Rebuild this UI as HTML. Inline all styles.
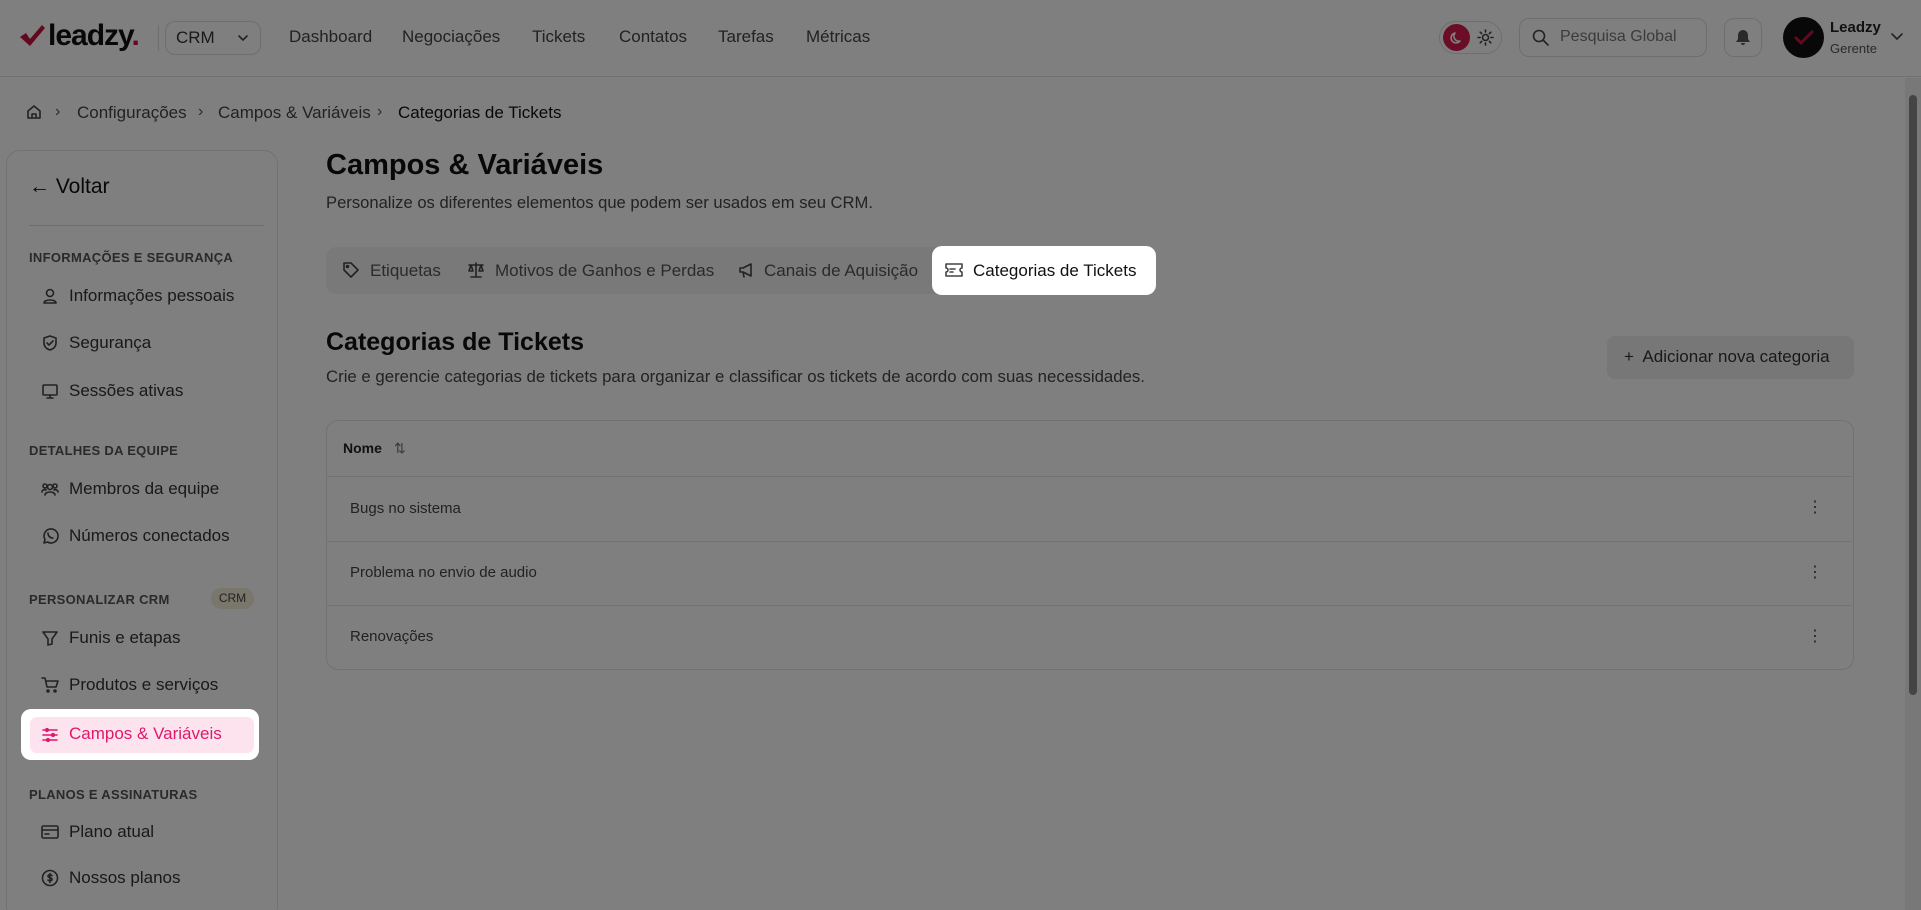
<!DOCTYPE html>
<html style="overflow:hidden;height:910px"><head><meta charset="utf-8"><style>
*{box-sizing:border-box;margin:0;padding:0}
body{width:1921px;height:910px;overflow:hidden;background:#fff;font-family:"Liberation Sans",Arial,sans-serif;color:#1a1a1a;position:relative}
.a{position:absolute;white-space:nowrap}
.hdr{position:absolute;left:0;top:0;width:1921px;height:77px;border-bottom:1px solid #e2e2e2;background:#fff}
.nav{font-size:17px;color:#444;top:27px}
.side{position:absolute;left:6px;top:150px;width:272px;height:770px;border:1px solid #e4e4e4;border-radius:14px;background:#fff}
.lbl{font-size:13px;font-weight:bold;color:#555;letter-spacing:.3px;left:29px}
.it{font-size:17px;color:#333;left:69px}
.ic{position:absolute;left:41px;width:18px;height:18px}
svg{fill:none;stroke:#444;stroke-width:1.6;stroke-linecap:round;stroke-linejoin:round}
.ov{position:absolute;left:0;top:0;width:1921px;height:910px;background:rgba(0,0,0,.5);z-index:5}
.tb{font-size:17px;color:#555;top:261px}
.row{position:absolute;left:327px;width:1525px;height:64px;border-top:1px solid #e6e6e6;font-size:15px;color:#444}
</style></head><body>
<div class="hdr"></div>
<svg class="a" style="left:18px;top:24px;width:28px;height:24px;stroke:none" viewBox="0 0 28 24"><path d="M2 13 L8 9 L12 15 L24 1 L27 4 L12 22 Z" fill="#c8103f"/></svg>
<div class="a" style="left:48px;top:19px;font-size:30px;font-weight:bold;color:#111;letter-spacing:-1px">leadzy<span style="color:#d0104a">.</span></div>
<div class="a" style="left:158px;top:25px;width:1px;height:26px;background:#ddd"></div>
<div class="a" style="left:165px;top:21px;width:96px;height:34px;border:1px solid #ddd;border-radius:10px"></div>
<div class="a" style="left:176px;top:28px;font-size:17px;color:#333">CRM</div>
<svg class="a" style="left:237px;top:33px;width:12px;height:10px" viewBox="0 0 12 10"><path d="M2 3l4 4 4-4"/></svg>
<div class="a nav" style="left:289px">Dashboard</div>
<div class="a nav" style="left:402px">Negociações</div>
<div class="a nav" style="left:532px">Tickets</div>
<div class="a nav" style="left:619px">Contatos</div>
<div class="a nav" style="left:718px">Tarefas</div>
<div class="a nav" style="left:806px">Métricas</div>
<div class="a" style="left:1439px;top:21px;width:63px;height:33px;border:1px solid #ddd;border-radius:17px"></div>
<div class="a" style="left:1443px;top:24px;width:27px;height:27px;border-radius:50%;background:#d81b50"></div>
<svg class="a" style="left:1450px;top:31px;width:14px;height:14px;stroke:#fff" viewBox="0 0 14 14"><path d="M10 10A5 5 0 0 1 5 2 5 5 0 1 0 10 10z"/></svg>
<svg class="a" style="left:1477px;top:29px;width:17px;height:17px" viewBox="0 0 17 17"><circle cx="8.5" cy="8.5" r="3"/><path d="M8.5 1v2M8.5 14v2M1 8.5h2M14 8.5h2M3.2 3.2l1.4 1.4M12.4 12.4l1.4 1.4M3.2 13.8l1.4-1.4M12.4 4.6l1.4-1.4"/></svg>
<div class="a" style="left:1519px;top:18px;width:188px;height:39px;border:1px solid #ddd;border-radius:10px"></div>
<svg class="a" style="left:1532px;top:29px;width:17px;height:17px" viewBox="0 0 17 17"><circle cx="7" cy="7" r="5.5"/><path d="M11 11l5 5"/></svg>
<div class="a" style="left:1560px;top:28px;font-size:16px;color:#777">Pesquisa Global</div>
<div class="a" style="left:1724px;top:18px;width:38px;height:39px;border:1px solid #ddd;border-radius:10px"></div>
<svg class="a" style="left:1735px;top:29px;width:16px;height:17px;stroke:none" viewBox="0 0 16 17"><path d="M8 1a5 5 0 0 0-5 5v4l-2 3h14l-2-3V6a5 5 0 0 0-5-5zM6 14a2 2 0 0 0 4 0z" fill="#555"/></svg>
<div class="a" style="left:1783px;top:17px;width:41px;height:41px;border-radius:50%;background:#111"></div>
<svg class="a" style="left:1794px;top:29px;width:20px;height:18px;stroke:#c8103f;stroke-width:3" viewBox="0 0 20 18"><path d="M2 9l5 5L18 3"/></svg>
<div class="a" style="left:1830px;top:19px;font-size:15px;font-weight:bold;color:#222">Leadzy</div>
<div class="a" style="left:1830px;top:41px;font-size:13px;color:#555">Gerente</div>
<svg class="a" style="left:1890px;top:31px;width:14px;height:10px" viewBox="0 0 14 10"><path d="M2 3l5 5 5-5"/></svg>

<svg class="a" style="left:26px;top:104px;width:16px;height:16px" viewBox="0 0 16 16"><path d="M2 7l6-5 6 5v7H2z M6 14v-4h4v4"/></svg>
<div class="a" style="left:55px;top:103px;font-size:16px;color:#555">›</div>
<div class="a" style="left:77px;top:103px;font-size:17px;color:#444">Configurações</div>
<div class="a" style="left:198px;top:103px;font-size:16px;color:#555">›</div>
<div class="a" style="left:218px;top:103px;font-size:17px;color:#444">Campos &amp; Variáveis</div>
<div class="a" style="left:377px;top:103px;font-size:16px;color:#555">›</div>
<div class="a" style="left:398px;top:103px;font-size:17px;color:#111">Categorias de Tickets</div>

<div class="side"></div>
<div class="a" style="left:29px;top:175px;font-size:21px;color:#111">← Voltar</div>
<div class="a" style="left:29px;top:225px;width:235px;height:1px;background:#ddd"></div>
<div class="a lbl" style="top:250px">INFORMAÇÕES E SEGURANÇA</div>
<svg class="ic" style="top:287px" viewBox="0 0 18 18"><circle cx="9" cy="6" r="3.5"/><path d="M3 16c0-4 12-4 12 0z"/></svg>
<div class="a it" style="top:286px">Informações pessoais</div>
<svg class="ic" style="top:334px" viewBox="0 0 18 18"><path d="M9 2l6 2v5c0 4-3 6-6 7-3-1-6-3-6-7V4z M6 9l2 2 4-4"/></svg>
<div class="a it" style="top:333px">Segurança</div>
<svg class="ic" style="top:382px" viewBox="0 0 18 18"><rect x="2" y="3" width="14" height="10" rx="1"/><path d="M6 16h6M9 13v3"/></svg>
<div class="a it" style="top:381px">Sessões ativas</div>
<div class="a lbl" style="top:443px">DETALHES DA EQUIPE</div>
<svg class="ic" style="top:480px" viewBox="0 0 18 18"><circle cx="9" cy="7" r="2.5"/><circle cx="4" cy="6" r="2"/><circle cx="14" cy="6" r="2"/><path d="M4 15c0-4 10-4 10 0M1 12c0-2 3-3 4-2M17 12c0-2-3-3-4-2"/></svg>
<div class="a it" style="top:479px">Membros da equipe</div>
<svg class="ic" style="top:527px" viewBox="0 0 18 18"><path d="M3 16l1-3.5A7 7 0 1 1 6.5 15z"/><path d="M7 6c0 3 2 5 5 5"/></svg>
<div class="a it" style="top:526px">Números conectados</div>
<div class="a lbl" style="top:592px">PERSONALIZAR CRM</div>
<div class="a" style="left:211px;top:588px;width:43px;height:21px;border-radius:10px;background:#f3ecd8;font-size:12px;color:#444;text-align:center;line-height:21px">CRM</div>
<svg class="ic" style="top:629px" viewBox="0 0 18 18"><path d="M2 3h14l-5 7v5l-4 1v-6z"/></svg>
<div class="a it" style="top:628px">Funis e etapas</div>
<svg class="ic" style="top:676px" viewBox="0 0 18 18"><path d="M1 2h3l2 9h9l2-6H5"/><circle cx="7" cy="15" r="1"/><circle cx="14" cy="15" r="1"/></svg>
<div class="a it" style="top:675px">Produtos e serviços</div>
<div class="a lbl" style="top:787px">PLANOS E ASSINATURAS</div>
<svg class="ic" style="top:823px" viewBox="0 0 18 18"><rect x="1" y="3" width="16" height="12" rx="1.5"/><path d="M1 7h16M4 11h4"/></svg>
<div class="a it" style="top:822px">Plano atual</div>
<svg class="ic" style="top:869px" viewBox="0 0 18 18"><circle cx="9" cy="9" r="7.5"/><path d="M11 6.5c-1-1-4-1-4 .8s4 1 4 3-3 1.8-4 .8M9 4.5v9"/></svg>
<div class="a it" style="top:868px">Nossos planos</div>

<div class="a" style="left:326px;top:149px;font-size:29px;font-weight:bold;color:#111">Campos &amp; Variáveis</div>
<div class="a" style="left:326px;top:193px;font-size:16.6px;color:#444">Personalize os diferentes elementos que podem ser usados em seu CRM.</div>
<div class="a" style="left:326px;top:247px;width:830px;height:47px;background:#f3f3f3;border-radius:10px"></div>
<svg class="a" style="left:342px;top:261px;width:18px;height:18px" viewBox="0 0 18 18"><path d="M2 2h7l7 7-7 7-7-7z"/><circle cx="5.5" cy="5.5" r="1"/></svg>
<div class="a tb" style="left:370px">Etiquetas</div>
<svg class="a" style="left:467px;top:261px;width:18px;height:18px" viewBox="0 0 18 18"><path d="M9 2v14M4 16h10M2 4h14M4 4l-2 6h4zM14 4l-2 6h4z"/></svg>
<div class="a tb" style="left:495px">Motivos de Ganhos e Perdas</div>
<svg class="a" style="left:737px;top:261px;width:18px;height:18px" viewBox="0 0 18 18"><path d="M3 7v4h3l8 4V3L6 7z M6 11l1 5"/></svg>
<div class="a tb" style="left:764px">Canais de Aquisição</div>

<div class="a" style="left:326px;top:328px;font-size:25px;font-weight:bold;color:#111">Categorias de Tickets</div>
<div class="a" style="left:326px;top:367px;font-size:16.8px;color:#444">Crie e gerencie categorias de tickets para organizar e classificar os tickets de acordo com suas necessidades.</div>
<div class="a" style="left:1607px;top:336px;width:247px;height:43px;background:#eee;border-radius:8px"></div>
<div class="a" style="left:1624px;top:347px;font-size:17px;color:#333">+&nbsp; Adicionar nova categoria</div>
<div class="a" style="left:326px;top:420px;width:1528px;height:250px;border:1px solid #e2e2e2;border-radius:12px"></div>
<div class="a" style="left:343px;top:440px;font-size:14px;font-weight:bold;color:#222">Nome</div>
<div class="a" style="left:394px;top:440px;font-size:14px;color:#777">⇅</div>
<div class="row" style="top:476px"><span class="a" style="left:23px;top:23px">Bugs no sistema</span><span class="a" style="left:1480px;top:20px;font-size:16px">⋮</span></div>
<div class="row" style="top:541px"><span class="a" style="left:23px;top:22px">Problema no envio de audio</span><span class="a" style="left:1480px;top:20px;font-size:16px">⋮</span></div>
<div class="row" style="top:605px;height:64px"><span class="a" style="left:23px;top:22px">Renovações</span><span class="a" style="left:1480px;top:20px;font-size:16px">⋮</span></div>
<div class="a" style="left:1905px;top:78px;width:16px;height:832px;background:#f1f1f1"></div>
<div class="a" style="left:1909px;top:95px;width:8px;height:600px;background:#888;border-radius:4px"></div>

<div class="ov"></div>
<div class="a" style="z-index:6;left:932px;top:246px;width:224px;height:49px;background:#fff;border-radius:10px"></div>
<svg class="a" style="z-index:7;left:945px;top:262px;width:18px;height:16px" viewBox="0 0 18 16"><path d="M1 2h16v4a2 2 0 0 0 0 4v4H1v-4a2 2 0 0 0 0-4z M5 7h5M5 10h3"/></svg>
<div class="a" style="z-index:7;left:973px;top:261px;font-size:17px;color:#111">Categorias de Tickets</div>
<div class="a" style="z-index:6;left:21px;top:709px;width:238px;height:51px;background:#fff;border-radius:10px"></div>
<div class="a" style="z-index:7;left:30px;top:717px;width:224px;height:36px;background:#fde3ee;border-radius:7px"></div>
<svg class="a" style="z-index:7;left:41px;top:726px;width:18px;height:18px;stroke:#e0186c" viewBox="0 0 18 18"><path d="M2 4h14M2 9h14M2 14h14"/><circle cx="6" cy="4" r="1.3"/><circle cx="12" cy="9" r="1.3"/><circle cx="7" cy="14" r="1.3"/></svg>
<div class="a" style="z-index:7;left:69px;top:724px;font-size:17px;color:#e0186c">Campos &amp; Variáveis</div>
</body></html>
